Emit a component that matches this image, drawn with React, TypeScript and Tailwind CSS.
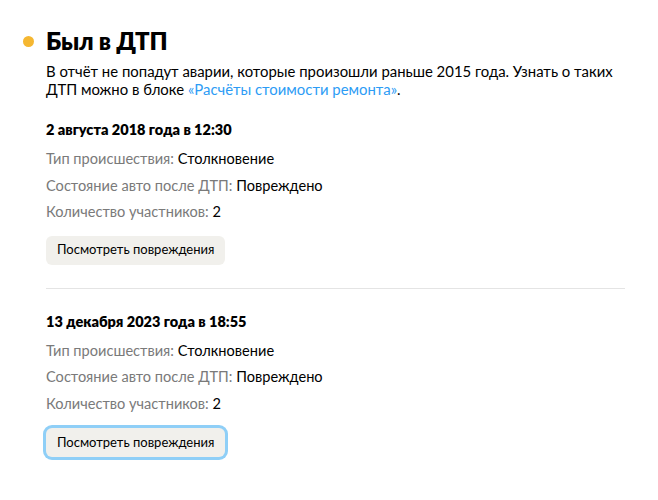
import React from 'react';

type Accident = {
  date: string;
  type: string;
  state: string;
  count: number;
};

const accidents: Accident[] = [
  { date: '2 августа 2018 года в 12:30', type: 'Столкновение', state: 'Повреждено', count: 2 },
  { date: '13 декабря 2023 года в 18:55', type: 'Столкновение', state: 'Повреждено', count: 2 },
];

const Row: React.FC<{ label: string; value: string | number }> = ({ label, value }) => (
  <p className="text-[14.6px] leading-[26.5px] text-[#7a7a7a]">
    {label}: <span className="text-black">{value}</span>
  </p>
);

const App: React.FC = () => {
  return (
    <div className="min-h-screen bg-white font-['Lato','Noto_Sans',sans-serif] text-black">
      <div className="pl-[23px] pr-[33px] pt-[25px]">
        {/* Header */}
        <div className="flex items-center gap-[12px]">
          <span className="h-[11px] w-[11px] rounded-full bg-[#f5b731]" />
          <h1 className="text-[24px] font-extrabold leading-[32px] tracking-[-0.2px]">Был в ДТП</h1>
        </div>

        <div className="pl-[23px]">
          <p className="mt-[5px] text-[14.9px] leading-[18px]">
            В отчёт не попадут аварии, которые произошли раньше 2015 года. Узнать о таких ДТП можно в блоке{' '}
            <span className="text-[#2d9cf5]">«Расчёты стоимости ремонта»</span>.
          </p>

          {accidents.map((a, i) => (
            <div key={a.date} className={i > 0 ? 'mt-[23px] border-t border-[#e4e4e4] pt-[23px]' : 'mt-[22px]'}>
              <h3 className="text-[14.5px] font-extrabold leading-[20px]">{a.date}</h3>
              <div className="mt-[6px]">
                <Row label="Тип происшествия" value={a.type} />
                <Row label="Состояние авто после ДТП" value={a.state} />
                <Row label="Количество участников" value={a.count} />
              </div>
              <button
                className={
                  i === 1
                    ? 'mt-[11px] h-[29px] rounded-[6px] bg-[#f1f0ec] px-[11px] text-[13px] ring-[3px] ring-[#8fcff7]'
                    : 'mt-[10px] h-[29px] rounded-[6px] bg-[#f1f0ec] px-[11px] text-[13px]'
                }
              >
                Посмотреть повреждения
              </button>
            </div>
          ))}
        </div>
      </div>
    </div>
  );
};

export default App;
